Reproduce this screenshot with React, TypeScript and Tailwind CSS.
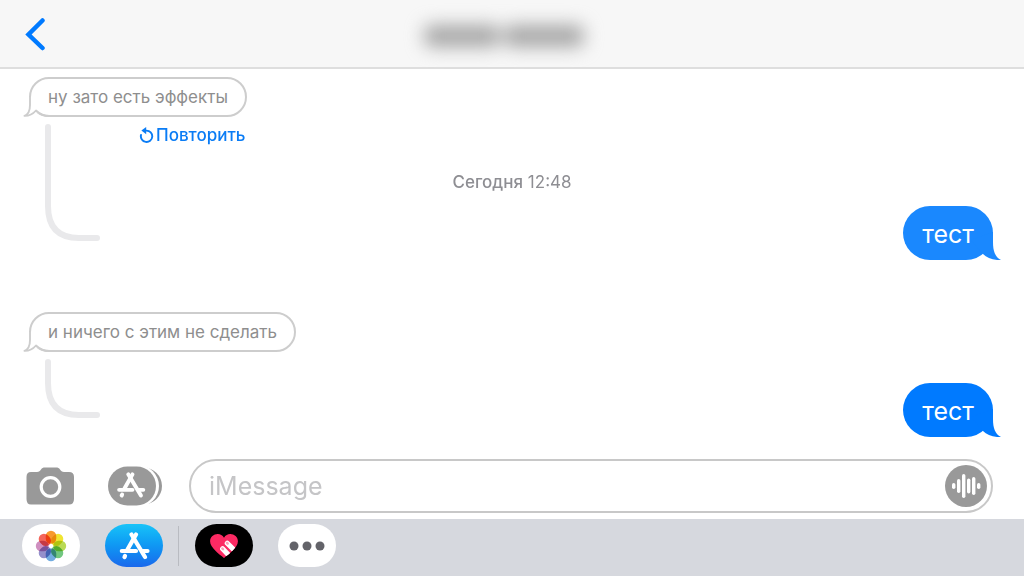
import type { ReactNode } from "react";

const PETALS = [
  { angle: 0, color: "#f79a2c" },
  { angle: 45, color: "#f0e532" },
  { angle: 90, color: "#bada55" },
  { angle: 135, color: "#72c780" },
  { angle: 180, color: "#72ace0" },
  { angle: 225, color: "#9590cb" },
  { angle: 270, color: "#cf8fc0" },
  { angle: 315, color: "#f4655a" },
];

const WAVE_BARS = [
  { x: 8, h: 6 },
  { x: 13, h: 14 },
  { x: 18, h: 24 },
  { x: 23, h: 15 },
  { x: 28, h: 18 },
  { x: 33, h: 6 },
];

function IncomingBubble({ children }: { children: ReactNode }) {
  return (
    <div className="relative ml-[29px] flex h-10 w-fit items-center rounded-full border-2 border-[#cdcdcd] bg-white px-[17px] text-[17px] leading-5 text-[#8e8e8e]">
      {children}
      {/* Tail */}
      <svg className="absolute -bottom-[2px] -left-[8px]" width="28" height="22" viewBox="0 0 28 22" fill="none">
        <path d="M6 2 V10 C6 16 4 20 1 21 C6 21 10 19 12 17 L17 19 L20 12 L12 2 Z" fill="#fff" />
        <path
          d="M7 1 V10 C7 16 5 19.500 1.500 20.900 C6 21 10 19 13 15.500 C16 18.500 20 21 27 21"
          stroke="#cdcdcd"
          strokeWidth="1.900"
          strokeLinejoin="round"
        />
      </svg>
    </div>
  );
}

function OutgoingBubble({ faded, children }: { faded?: boolean; children: ReactNode }) {
  const tone = faded ? "bg-[#1a88fe] text-[#1a88fe]" : "bg-[#007aff] text-[#007aff]";
  return (
    <div className={`relative mr-[31px] flex h-[54px] w-fit items-center self-end rounded-full px-[19px] pt-[2px] ${tone}`}>
      <span className="text-[25px] leading-8 text-white">{children}</span>
      <svg className="absolute -right-2 bottom-0" width="34" height="30" viewBox="0 0 34 30" fill="currentColor">
        <path d="M26 2 V12 C26 21 28 27 34 30 C26 30.500 20 28 16 24 L4 10 Z" />
      </svg>
    </div>
  );
}

function Thread({ height }: { height: number }) {
  const bottom = height - 3;
  return (
    <svg className="col-start-1 row-start-1 ml-11 mt-[7px]" width="57" height={height} fill="none">
      <path
        d={`M4 3 V${bottom - 32} C4 ${bottom - 10} 15 ${bottom} 35 ${bottom} H53`}
        stroke="#e9e9eb"
        strokeWidth="6"
        strokeLinecap="round"
      />
    </svg>
  );
}

function AppStoreGlyph() {
  return (
    <g stroke="#fff" strokeWidth="4.200" strokeLinecap="round" fill="none">
      <path d="M17 2.500 L8.500 17.500" />
      <path d="M12.500 2.500 L26 25" />
      <path d="M2.800 19 H17 M24 19 H28.500" />
      <path d="M6 24 L5.500 25" />
    </g>
  );
}

function CameraIcon() {
  return (
    <svg width="49" height="38" viewBox="0 0 49 38">
      <path
        d="M5 5 H11 C13 5 14 4 15 2.500 C16 1 17 .5 19 .5 H30 C32 .5 33 1 34 2.500 C35 4 36 5 38 5 H43 Q48 5 48 10 V32 Q48 37.500 43 37.500 H5 Q.5 37.500 .5 32 V10 Q.5 5 5 5 Z"
        fill="#999"
      />
      <circle cx="24.500" cy="20" r="9.300" fill="none" stroke="#fff" strokeWidth="3.200" />
    </svg>
  );
}

function AppsIcon() {
  return (
    <svg width="54" height="40" viewBox="0 0 54 40">
      <rect x="8" y="1.500" width="46" height="37" rx="18.500" fill="#999" />
      <rect x="2" y="-1" width="49" height="42" rx="21" fill="#fff" />
      <rect x="0" y="0.500" width="48" height="39" rx="19.500" fill="#999" />
      <g transform="translate(8.500 6) scale(.94)">
        <AppStoreGlyph />
      </g>
    </svg>
  );
}

function TrayButton({ label, tone, children }: { label: string; tone: string; children: ReactNode }) {
  return (
    <button
      type="button"
      aria-label={label}
      className={`flex h-[43px] w-[58px] items-center justify-center rounded-full ${tone}`}
    >
      {children}
    </button>
  );
}

export default function App() {
  return (
    <div className="flex min-h-screen flex-col bg-white font-[Inter,'Liberation_Sans',sans-serif]">
      <header className="flex h-[69px] items-center border-b-2 border-[#dedede] bg-[#f7f7f7] px-6">
        <div className="flex-1">
          <button type="button" aria-label="Назад" className="block">
            <svg width="24" height="34" viewBox="0 0 24 34" fill="none">
              <path d="M18.500 3.500 L4.500 17.500 L18.500 31" stroke="#007aff" strokeWidth="4.500" strokeLinecap="round" strokeLinejoin="miter" />
            </svg>
          </button>
        </div>
        {/* Contact name, hidden */}
        <div className="flex gap-1 pr-4 pt-1 blur-[9px]">
          <span className="h-[22px] w-[76px] rounded-lg bg-[#a6a6a6]" />
          <span className="h-[22px] w-[80px] rounded-lg bg-[#a6a6a6]" />
        </div>
        <div className="flex-1" />
      </header>

      <main className="flex flex-1 flex-col pt-2">
        <IncomingBubble>ну зато есть эффекты</IncomingBubble>
        <div className="grid">
          <Thread height={117} />
          <div className="col-start-1 row-start-1 flex flex-col">
            <button
              type="button"
              className="ml-[139px] mt-2 flex items-center gap-[2px] self-start text-[17px] font-medium leading-5 text-[#0a7cf5]"
            >
              <svg width="15" height="16" viewBox="0 0 15 16" fill="none">
                <path d="M2 8 A5.700 5.700 0 1 0 7.500 3.600 H4.500" stroke="currentColor" strokeWidth="1.900" strokeLinecap="round" />
                <path d="M7.200 0 L2.400 3.600 L7.200 7.200 Z" fill="currentColor" />
              </svg>
              Повторить
            </button>
            <p className="mt-[27px] text-center text-[17px] leading-5 text-[#8e8e93]">
              <span className="font-medium">Сегодня</span> 12:48
            </p>
            <div className="mt-[14px] flex flex-col">
              <OutgoingBubble faded>тест</OutgoingBubble>
            </div>
          </div>
        </div>

        <div className="mt-[52px]">
          <IncomingBubble>и ничего с этим не сделать</IncomingBubble>
        </div>
        <div className="grid">
          <Thread height={59} />
          <div className="col-start-1 row-start-1 flex flex-col pt-[31px]">
            <OutgoingBubble>тест</OutgoingBubble>
          </div>
        </div>
      </main>

      <form className="flex items-center pb-[6px] pl-[26px] pr-[31px]" onSubmit={(e) => e.preventDefault()}>
        <button type="button" aria-label="Камера">
          <CameraIcon />
        </button>
        <button type="button" aria-label="Приложения" className="ml-[33px]">
          <AppsIcon />
        </button>
        <div className="ml-[27px] flex h-[54px] flex-1 items-center rounded-full border-2 border-[#c8c8c8] pl-[18px] pr-1">
          <input
            type="text"
            aria-label="Сообщение"
            placeholder="iMessage"
            className="min-w-0 flex-1 bg-transparent text-[25px] leading-8 outline-none placeholder:text-[#c5c5c7]"
          />
          <button type="button" aria-label="Аудиосообщение">
            <svg width="42" height="42" viewBox="0 0 42 42">
              <circle cx="21" cy="21" r="21" fill="#999" />
              {WAVE_BARS.map((bar) => (
                <rect key={bar.x} x={bar.x - 1} y={21 - bar.h / 2} width="3.400" height={bar.h} rx="1.700" fill="#fff" />
              ))}
            </svg>
          </button>
        </div>
      </form>

      <nav className="flex h-[57px] items-center bg-[#d6d8de] pb-1 pl-[22px]">
        <TrayButton label="Фото" tone="bg-white">
          <svg width="32" height="32" viewBox="-16 -16 32 32">
            {PETALS.map((petal) => (
              <rect
                key={petal.angle}
                x="-5.250"
                y="-15.200"
                width="10.500"
                height="13"
                rx="5.250"
                fill={petal.color}
                transform={`rotate(${petal.angle})`}
                className="mix-blend-multiply"
              />
            ))}
          </svg>
        </TrayButton>
        <TrayButton label="App Store" tone="ml-[25px] bg-linear-to-b from-[#1ac3f8] to-[#1b68ec]">
          <svg width="31" height="28" viewBox="0 0 31 28">
            <AppStoreGlyph />
          </svg>
        </TrayButton>
        <div className="ml-[15px] mr-4 h-10 w-px bg-[#b9bbc1]" />
        <TrayButton label="Digital Touch" tone="bg-black">
          <svg width="30" height="26" viewBox="0 0 32 28">
            <defs>
              <clipPath id="heart">
                <path d="M16 27 C11 23 1 16 1 9 C1 1 12 -2 16 5 C20 -2 31 1 31 9 C31 16 21 23 16 27 Z" />
              </clipPath>
            </defs>
            <g clipPath="url(#heart)">
              <rect width="32" height="28" fill="#fc2a63" />
              <g stroke="#fff" strokeWidth="5.500" strokeLinecap="round">
                <path d="M19.500 11 L29.500 21" />
                <path d="M14.500 17 L24 27" />
              </g>
              <g stroke="#f9a0b8" strokeWidth="2.600" strokeLinecap="round">
                <path d="M19.200 10.700 L20 11.500" />
                <path d="M14.200 16.700 L15 17.500" />
              </g>
            </g>
          </svg>
        </TrayButton>
        <TrayButton label="Ещё" tone="ml-[25px] bg-white">
          <svg width="36" height="10" viewBox="0 0 36 10" fill="#636369">
            <circle cx="5" cy="5" r="4.500" />
            <circle cx="18" cy="5" r="4.500" />
            <circle cx="31" cy="5" r="4.500" />
          </svg>
        </TrayButton>
      </nav>
    </div>
  );
}
